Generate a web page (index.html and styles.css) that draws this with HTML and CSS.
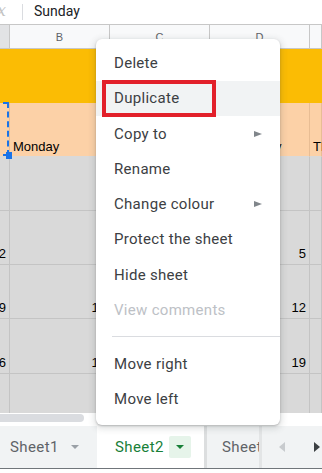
FILE: index.html
```html
<!DOCTYPE html>
<html>
<head>
    <title>Sheet tab menu</title>
    <link rel="stylesheet" href="styles.css">
</head>
<body>
    <div class="formula-bar">
        <span class="fx">fx</span>
        <span class="fx-sep"></span>
        <span class="fx-value">Sunday</span>
    </div>

    <div class="grid">
        <div class="head head-sel"></div>
        <div class="head">B</div>
        <div class="head">C</div>
        <div class="head">D</div>
        <div class="head"></div>

        <div class="cell banner"></div>

        <div class="cell peach sel"></div>
        <div class="cell peach">Monday</div>
        <div class="cell peach">Tuesday</div>
        <div class="cell peach">Wednesday</div>
        <div class="cell peach">Thursday</div>

        <div class="cell grey"></div>
        <div class="cell grey"></div>
        <div class="cell grey"></div>
        <div class="cell grey"></div>
        <div class="cell grey"></div>

        <div class="cell grey num">2</div>
        <div class="cell grey num">3</div>
        <div class="cell grey num">4</div>
        <div class="cell grey num">5</div>
        <div class="cell grey"></div>

        <div class="cell grey num">9</div>
        <div class="cell grey num">10</div>
        <div class="cell grey num">11</div>
        <div class="cell grey num">12</div>
        <div class="cell grey"></div>

        <div class="cell grey num">16</div>
        <div class="cell grey num">17</div>
        <div class="cell grey num">18</div>
        <div class="cell grey num">19</div>
        <div class="cell grey"></div>

        <div class="cell grey last"></div>
        <div class="cell grey last"></div>
        <div class="cell grey last"></div>
        <div class="cell grey last"></div>
        <div class="cell grey last"></div>
    </div>

    <div class="hscroll">
        <div class="hscroll-thumb"></div>
    </div>

    <div class="tabs">
        <div class="tab">
            Sheet1
            <span class="caret"></span>
        </div>
        <div class="tab tab-active">
            Sheet2
            <span class="caret-box"><span class="caret"></span></span>
        </div>
        <div class="tab tab-clip">Sheet3</div>
        <div class="tab-nav">
            <span class="nav-left"></span>
            <span class="nav-right"></span>
        </div>
    </div>
    <div class="bottom-strip"></div>

    <div class="menu">
        <div class="menu-item">Delete</div>
        <div class="menu-item menu-item-hover">Duplicate</div>
        <div class="menu-item">Copy to <span class="sub-arrow"></span></div>
        <div class="menu-item">Rename</div>
        <div class="menu-item">Change colour <span class="sub-arrow"></span></div>
        <div class="menu-item">Protect the sheet</div>
        <div class="menu-item">Hide sheet</div>
        <div class="menu-item menu-item-disabled">View comments</div>
        <div class="menu-sep"></div>
        <div class="menu-item">Move right</div>
        <div class="menu-item">Move left</div>
    </div>

    <div class="highlight-box"></div>
</body>
</html>
```

FILE: styles.css
```css
* {
    box-sizing: border-box;
}
body {
    margin: 0;
    width: 322px;
    height: 473px;
    overflow: hidden;
    position: relative;
    background-color: #fff;
    font-family: "Liberation Sans", Arial, sans-serif;
}

/* formula bar */
.formula-bar {
    height: 25px;
    display: flex;
    align-items: center;
    padding-bottom: 3px;
    border-bottom: 1px solid #c7c7c7;
    white-space: nowrap;
}
.fx {
    font-family: "DejaVu Serif", serif;
    font-style: italic;
    font-size: 16px;
    color: #c4c4c4;
    margin-left: -9px;
    width: 31px;
}
.fx-sep {
    width: 1px;
    height: 16px;
    margin-top: 3px;
    background-color: #dadce0;
    margin-right: 11px;
}
.fx-value {
    font-family: Roboto, sans-serif;
    font-size: 14px;
    color: #202124;
}

/* grid */
.grid {
    display: grid;
    grid-template-columns: 10px 100px 100px 100px 12px;
    grid-template-rows: 24px 54px 54px 54px 54px 54px 55px 39px;
    width: 322px;
    overflow: hidden;
}
.head {
    background-color: #f8f9fa;
    border-right: 1px solid #c7c7c7;
    border-bottom: 1px solid #c7c7c7;
    color: #5f6368;
    font-size: 11px;
    display: flex;
    align-items: center;
    justify-content: center;
}
.head-sel {
    background-color: #e2e3e5;
}
.cell {
    font-size: 13px;
    color: #000;
    white-space: nowrap;
    display: flex;
    align-items: flex-end;
    padding: 0 3px 2px 3px;
    border-right: 1px solid #c4c4c4;
    border-bottom: 1px solid #c4c4c4;
}
.banner {
    grid-column: 1 / -1;
    background-color: #fbbc04;
    border: none;
}
.peach {
    background-color: #fcd1a7;
    border-right-color: #e8bd94;
    border-bottom-color: #d9d9d9;
}
.grey {
    background-color: #d9d9d9;
}
.num {
    justify-content: flex-end;
    padding-bottom: 3px;
}
.last {
    border-bottom: none;
}
.sel {
    position: relative;
}
.sel::before {
    content: "";
    position: absolute;
    left: -20px;
    top: -1px;
    right: 0;
    bottom: 0;
    border: 2px dashed #1a73e8;
}
.sel::after {
    content: "";
    position: absolute;
    right: -3px;
    bottom: -3px;
    width: 6px;
    height: 7px;
    background-color: #1a73e8;
}

/* horizontal scrollbar */
.hscroll {
    height: 13px;
    background-color: #fff;
    padding-top: 1px;
}
.hscroll-thumb {
    width: 90px;
    height: 8px;
    margin-left: -6px;
    border-radius: 4px;
    background-color: #dadce0;
}

/* sheet tabs */
.tabs {
    height: 43px;
    display: flex;
    background-color: #f1f3f4;
    border-bottom: 1px solid #70757a;
    font-family: Roboto, sans-serif;
    font-size: 15px;
    letter-spacing: 0.4px;
    color: #5f6368;
    white-space: nowrap;
}
.tab {
    display: flex;
    align-items: center;
    width: 97px;
    padding-left: 10px;
}
.tab .caret {
    margin-left: 12px;
    border-left: 4px solid transparent;
    border-right: 4px solid transparent;
    border-top: 4px solid #9aa0a6;
}
.tab-active {
    width: 110px;
    padding-left: 18px;
    background-color: #fff;
    color: #188038;
    border-right: 3px solid #dcdedf;
}
.caret-box {
    width: 22px;
    height: 22px;
    margin-left: 5px;
    border-radius: 2px;
    background-color: #e6f4ea;
    display: flex;
    align-items: center;
    justify-content: center;
}
.tab-active .caret {
    margin-left: 0;
    border-top-color: #188038;
}
.tab-clip {
    width: 55px;
    padding-left: 15px;
    overflow: hidden;
    border-right: 3px solid #e3e5e6;
}
.tab-nav {
    flex: 1;
    display: flex;
    align-items: center;
    padding-left: 17px;
    gap: 29px;
}
.nav-left {
    border-top: 5px solid transparent;
    border-bottom: 5px solid transparent;
    border-right: 6px solid #c8cbce;
}
.nav-right {
    border-top: 5px solid transparent;
    border-bottom: 5px solid transparent;
    border-left: 6px solid #3c4043;
}
.bottom-strip {
    height: 4px;
    background-color: #fff;
}

/* tab context menu */
.menu {
    position: absolute;
    left: 96px;
    top: 39px;
    width: 184px;
    padding: 6.4px 0 8.4px;
    background-color: #fff;
    border-radius: 6px;
    box-shadow: 0 2px 6px 2px rgba(60, 64, 67, 0.15), 0 1px 2px rgba(60, 64, 67, 0.3);
    font-family: Roboto, sans-serif;
    font-size: 15px;
    letter-spacing: 0.3px;
    color: #3c4043;
}
.menu-item {
    height: 35.25px;
    display: flex;
    align-items: center;
    justify-content: space-between;
    padding: 0 18px;
    white-space: nowrap;
}
.menu-item-hover {
    background-color: #f1f3f4;
}
.menu-item-disabled {
    color: #bdc1c6;
}
.sub-arrow {
    border-top: 3.5px solid transparent;
    border-bottom: 3.5px solid transparent;
    border-left: 8px solid #80868b;
}
.menu-sep {
    height: 1px;
    margin: 9px 0 8.5px 16px;
    background-color: #dadce0;
}

/* annotation box */
.highlight-box {
    position: absolute;
    left: 102px;
    top: 80px;
    width: 114px;
    height: 37px;
    border: 4px solid #e2202a;
}
```
